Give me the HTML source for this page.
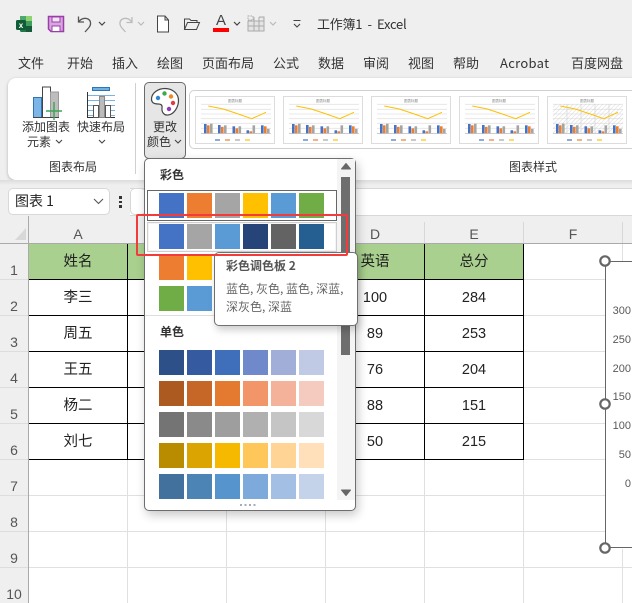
<!DOCTYPE html>
<html lang="zh"><head><meta charset="utf-8"><title>工作簿1 - Excel</title>
<style>
html,body{margin:0;padding:0;width:632px;height:603px;overflow:hidden;background:#fff}
body{position:relative;font-family:"Liberation Sans","Noto Sans CJK SC",sans-serif;color:#222}
div,span,svg{position:absolute;box-sizing:border-box}
.t{white-space:nowrap;line-height:20px;height:20px;font-size:13px;font-family:"Noto Sans CJK SC","Liberation Sans",sans-serif;color:#333}
.c{text-align:center;transform:translateX(-50%)}
.h{background:#ececec}
.s{width:25px;height:25px}
.cell{font-size:14.5px;color:#222;text-align:center;width:98px;line-height:36px;height:36px;font-family:"Liberation Sans","Noto Sans CJK SC",sans-serif}
.hd{font-size:14px;color:#555;text-align:center;width:98px;line-height:20px;height:20px;top:224px}
.rn{font-size:14px;color:#555;left:0;width:28px;text-align:center;line-height:20px;height:20px}
.b{background:#000}
.g{background:#e0e0e0}
.y{font-size:11px;color:#595959;right:1px;line-height:14px;height:14px}
</style></head><body>

<!-- top chrome -->
<div style="left:0;top:0;width:632px;height:216px;background:#efefef"></div>

<!-- QAT icons -->
<svg style="left:14px;top:14px" width="20" height="20" viewBox="0 0 20 20">
<rect x="6" y="2" width="12" height="16" rx="1.5" fill="#21784a"/><rect x="6" y="2" width="6" height="5" fill="#4ea86b"/><rect x="12" y="2" width="6" height="5" fill="#8fd36e"/><rect x="12" y="7" width="6" height="5" fill="#3f9e5f"/><rect x="12" y="12" width="6" height="6" fill="#175a3a"/><rect x="2" y="6" width="10" height="10" rx="1.5" fill="#0f5c37"/>
<text x="7" y="14" font-size="8" font-weight="bold" fill="#fff" text-anchor="middle" font-family="Liberation Sans">x</text></svg>
<svg style="left:47px;top:15px" width="18" height="18" viewBox="0 0 18 18"><path d="M1.5 1.5H16.500V16.500H4L1.500 14Z" fill="#d9a6e0" stroke="#9a3fa8" stroke-width="1.500"/><rect x="5" y="2" width="8" height="5" fill="#f3e4f5" stroke="#9a3fa8"/><rect x="5" y="11" width="8" height="5.500" fill="#fff" stroke="#9a3fa8"/></svg>
<svg style="left:76px;top:15px" width="20" height="18" viewBox="0 0 20 18"><path d="M2.500 1.500V7H8M2.800 6.800C5 3.500 9 2.500 12 4C15.500 6 15 10 13 12.500L9 17" fill="none" stroke="#555" stroke-width="1.300"/></svg>
<svg style="left:115px;top:15px" width="20" height="18" viewBox="0 0 20 18"><path d="M17 2V7.500H11.500M16.700 7C14.500 3.500 10.500 2.500 7.500 4C4 6 4.500 10 6.500 12.500L10.500 17" fill="none" stroke="#bbb" stroke-width="1.300"/></svg>
<svg style="left:97px;top:20px" width="50" height="8" viewBox="0 0 50 8"><path d="M2 2L5 5L8 2" fill="none" stroke="#444" stroke-width="1.200"/><path d="M41 2L44 5L47 2" fill="none" stroke="#bbb" stroke-width="1.200"/></svg>
<svg style="left:156px;top:15px" width="14" height="18" viewBox="0 0 14 18"><path d="M1.500 1H9L12.500 5V17H1.500ZM9 1V5H12.500" fill="#fff" stroke="#444" stroke-width="1"/></svg>
<svg style="left:183px;top:17px" width="18" height="14" viewBox="0 0 18 14"><path d="M1.500 12V2H6.500L8 3.500H14V5.500M1.500 12.500H13.500L16.500 5.500H4.500Z" fill="none" stroke="#444" stroke-width="1"/></svg>
<div class="t" style="left:213px;top:11px;font-size:15px;color:#444;font-family:'Liberation Sans';width:16px;text-align:center">A</div>
<div style="left:213px;top:28px;width:16px;height:4px;background:#f00"></div>
<svg style="left:233px;top:20px" width="50" height="8" viewBox="0 0 50 8"><path d="M1 2L4 5L7 2" fill="none" stroke="#444" stroke-width="1.200"/><path d="M37 2L40 5L43 2" fill="none" stroke="#bbb" stroke-width="1.200"/></svg>
<svg style="left:247px;top:15px" width="18" height="17" viewBox="0 0 18 17"><path d="M1 6H17V16H1ZM1 11H17M7 2V16M12 2V16M12 2H17V6" fill="#e4e4e4" stroke="#aaa" stroke-width="1"/><path d="M1 1H6V5H1Z" fill="none" stroke="#aaa" stroke-dasharray="1.500 1"/></svg>
<svg style="left:292px;top:19px" width="10" height="11" viewBox="0 0 10 11"><path d="M1.500 1.500H8.500M2 5L5 8L8 5" fill="none" stroke="#444" stroke-width="1.100"/></svg>
<div class="t" style="left:317px;top:14px;font-size:13px;color:#333;letter-spacing:-.02em">工作簿1&nbsp; -&nbsp; Excel</div>

<!-- menu -->
<div class="t" style="left:18px;top:53px">文件</div>
<div class="t" style="left:67px;top:53px">开始</div>
<div class="t" style="left:112px;top:53px">插入</div>
<div class="t" style="left:157px;top:53px">绘图</div>
<div class="t" style="left:202px;top:53px">页面布局</div>
<div class="t" style="left:273px;top:53px">公式</div>
<div class="t" style="left:318px;top:53px">数据</div>
<div class="t" style="left:363px;top:53px">审阅</div>
<div class="t" style="left:408px;top:53px">视图</div>
<div class="t" style="left:453px;top:53px">帮助</div>
<div class="t" style="left:500px;top:53px;letter-spacing:.3px">Acrobat</div>
<div class="t" style="left:571px;top:53px">百度网盘</div>

<!-- ribbon -->
<div style="left:8px;top:78px;width:640px;height:102px;background:#fff;border-radius:8px;box-shadow:0 1px 3px rgba(0,0,0,.25)"></div>

<svg style="left:32px;top:86px" width="32" height="34" viewBox="0 0 32 34">
<rect x="1.500" y="11.500" width="8" height="20" fill="#7db5e6" stroke="#2e75b6"/>
<rect x="10.500" y="1" width="8" height="30.500" fill="#fff" stroke="#444"/>
<rect x="18.500" y="6" width="8" height="25.500" fill="#bdbdbd" stroke="#999"/>
<path d="M1 31.500H27" stroke="#444"/>
<path d="M22 16V34M14 25H30" stroke="#3aa655" stroke-width="1.400"/></svg>
<div class="t c" style="left:46px;top:117px;font-size:12px">添加图表</div>
<div class="t" style="left:27px;top:132px;font-size:12px">元素</div>
<svg style="left:55px;top:139px" width="8" height="6"><path d="M1 1L4 4L7 1" fill="none" stroke="#444" stroke-width="1.100"/></svg>

<svg style="left:86px;top:86px" width="30" height="34" viewBox="0 0 30 34">
<rect x="6.500" y="1.500" width="17" height="3" fill="#6fb1e4" stroke="#2e75b6"/>
<path d="M1 9.500H29M1 14.500H29M1 19.500H29M1 24.500H29M1 29.500H29" stroke="#7ab3e0" stroke-width="1"/>
<path d="M1.500 6V31.500H29" fill="none" stroke="#333"/>
<rect x="7.500" y="19.500" width="5" height="12" fill="#fff" stroke="#555"/><rect x="13.500" y="10.500" width="5" height="21" fill="#bbb" stroke="#888"/><rect x="19.500" y="19.500" width="5" height="12" fill="#fff" stroke="#555"/></svg>
<div class="t c" style="left:101px;top:117px;font-size:12px">快速布局</div>
<svg style="left:98px;top:139px" width="8" height="6"><path d="M1 1L4 4L7 1" fill="none" stroke="#444" stroke-width="1.100"/></svg>
<div class="t c" style="left:73px;top:157px;font-size:12px">图表布局</div>
<div style="left:135px;top:83px;width:1px;height:91px;background:#d0d0d0"></div>

<div style="left:144px;top:82px;width:42px;height:77px;background:#e6e6e6;border:1px solid #6a6a6a;border-radius:5px"></div>
<svg style="left:150px;top:87px" width="30" height="30" viewBox="0 0 30 30">
<path d="M15 1.500C8 1.500 1.500 6 1.500 12C1.500 16.500 5 17 8 17C11 17 12.500 18 12 21C11.500 25 14 28.500 18 28C24 27.500 28.500 20 28.500 13.500C28.500 6 22 1.500 15 1.500Z" fill="#fff" stroke="#444" stroke-width="1.200"/>
<circle cx="8" cy="11" r="2.200" fill="#2e86d1"/><circle cx="14.500" cy="6.500" r="2.200" fill="#3ea84a"/><circle cx="21" cy="9.500" r="2.200" fill="#ee8a1d"/><circle cx="23" cy="16" r="2.200" fill="#e33b3b"/><circle cx="19" cy="22" r="2.200" fill="#8e3bb5"/></svg>
<div class="t c" style="left:165px;top:117px;font-size:12px">更改</div>
<div class="t" style="left:147px;top:132px;font-size:12px">颜色</div>
<svg style="left:174px;top:139px" width="8" height="6"><path d="M1 1L4 4L7 1" fill="none" stroke="#444" stroke-width="1.100"/></svg>

<!-- gallery -->
<div style="left:189px;top:90px;width:460px;height:59px;border:1px solid #d0d0d0;border-radius:5px;background:#fff"></div>
<svg width="0" height="0" style="left:0;top:0"><defs>
<pattern id="ha" width="3" height="3" patternUnits="userSpaceOnUse" patternTransform="rotate(45)"><path d="M0 0V3" stroke="#c9c9c9" stroke-width=".7"/></pattern>
<g id="ch">
<rect x=".5" y=".5" width="79" height="47" fill="#fff" stroke="#dcdcdc"/>
<path d="M6 8.300H76M6 13.300H76M6 18H76M6 22.700H76M6 27.300H76M6 32.300H76" stroke="#e4e4e4" stroke-width=".8"/>
<path d="M6 37.500H76" stroke="#bbb" stroke-width=".7"/>
</g>
<g id="se">
<g fill="#4472c4"><rect x="9" y="28" width="2.600" height="9.300"/><rect x="23" y="29" width="2.600" height="8.300"/><rect x="37.500" y="30.300" width="2.600" height="7"/><rect x="51.500" y="34.300" width="2.600" height="3"/><rect x="66" y="29.300" width="2.600" height="8"/></g>
<g fill="#ed7d31"><rect x="12" y="29.300" width="2.600" height="8"/><rect x="26" y="30.800" width="2.600" height="6.500"/><rect x="40.500" y="32.300" width="2.600" height="5"/><rect x="54.500" y="35.300" width="2.600" height="2"/><rect x="69" y="30.300" width="2.600" height="7"/></g>
<g fill="#a5a5a5"><rect x="15" y="27.700" width="2.600" height="9.600"/><rect x="29" y="29.300" width="2.600" height="8"/><rect x="43.500" y="30.300" width="2.600" height="7"/><rect x="57.500" y="29.300" width="2.600" height="8"/><rect x="72" y="32.800" width="2.600" height="4.500"/></g>
<path d="M13.300 10L28.300 13L43.300 18L56.700 22.700L71 16.300" fill="none" stroke="#ffc000" stroke-width="1"/>
<path d="M20 44H25" stroke="#4472c4" stroke-width="1.200"/><path d="M30 44H35" stroke="#ed7d31" stroke-width="1.200"/><path d="M40 44H45" stroke="#a5a5a5" stroke-width="1.200"/><path d="M50 44H55" stroke="#ffc000" stroke-width="1.200"/>
<text x="40" y="6" font-size="3.500" text-anchor="middle" fill="#888" font-family="Noto Sans CJK SC">图表标题</text>
</g></defs></svg>
<svg style="left:195px;top:96px" width="437" height="48" viewBox="0 0 437 48">
<use href="#ch" x="0"/><use href="#se" x="0"/>
<use href="#ch" x="88"/><use href="#se" x="88"/>
<use href="#ch" x="176"/><use href="#se" x="176"/>
<use href="#ch" x="264"/><use href="#se" x="264"/>
<use href="#ch" x="352"/>
<rect x="358" y="8" width="70" height="29.500" fill="url(#ha)"/>
<path d="M372 8V37.500M386 8V37.500M400 8V37.500M414 8V37.500" stroke="#d0d0d0" stroke-width=".6"/>
<use href="#se" x="352"/>
</svg>
<div class="t c" style="left:533px;top:157px;font-size:12px">图表样式</div>

<!-- formula bar -->
<div style="left:130px;top:188px;width:502px;height:28px;background:#fff;border-top:1px solid #d8d8d8;border-bottom:1px solid #d8d8d8"></div>
<div style="left:0;top:180px;width:632px;height:5px;background:linear-gradient(#dcdcdc,#efefef)"></div>
<div style="left:8px;top:188px;width:102px;height:27px;background:#fff;border:1px solid #d8d8d8;border-radius:5px"></div>
<div class="t" style="left:15px;top:191px;font-size:14px;color:#222">图表 1</div>
<svg style="left:93px;top:198px" width="11" height="7"><path d="M1 1L5.500 5.500L10 1" fill="none" stroke="#555" stroke-width="1.100"/></svg>
<div style="left:119px;top:196px;width:2.500px;height:2.500px;background:#333"></div>
<div style="left:119px;top:200.500px;width:2.500px;height:2.500px;background:#333"></div>
<div style="left:119px;top:205px;width:2.500px;height:2.500px;background:#333"></div>
<div style="left:130px;top:188px;width:16px;height:27px;background:#fff;border:1px solid #d8d8d8;border-radius:5px"></div>

<!-- headers -->
<div class="h" style="left:0;top:216px;width:632px;height:28px;background:#efefef"></div>
<div style="left:0;top:243px;width:632px;height:1px;background:#aaa"></div>
<div class="h" style="left:0;top:244px;width:28px;height:359px;background:#efefef"></div>
<div style="left:28px;top:216px;width:1px;height:387px;background:#aaa"></div>
<svg style="left:14px;top:227px" width="13" height="14"><path d="M12 1V13H1Z" fill="#d8d8d8"/></svg>
<div class="hd" style="left:29px">A</div><div class="hd" style="left:326px">D</div><div class="hd" style="left:425px">E</div><div class="hd" style="left:524px">F</div>
<div style="left:424px;top:222px;width:1px;height:21px;background:#d8d8d8"></div>
<div style="left:523px;top:222px;width:1px;height:21px;background:#d8d8d8"></div>
<div style="left:622px;top:222px;width:1px;height:21px;background:#d8d8d8"></div>

<div class="rn" style="top:260px">1</div><div class="rn" style="top:296px;">2</div><div class="rn" style="top:332px">3</div><div class="rn" style="top:368px">4</div><div class="rn" style="top:404px">5</div><div class="rn" style="top:440px">6</div><div class="rn" style="top:476px">7</div><div class="rn" style="top:512px">8</div><div class="rn" style="top:548px">9</div><div class="rn" style="top:584px">10</div>
<div style="left:0;top:279px;width:28px;height:1px;background:#ddd"></div><div style="left:0;top:315px;width:28px;height:1px;background:#ddd"></div><div style="left:0;top:351px;width:28px;height:1px;background:#ddd"></div><div style="left:0;top:387px;width:28px;height:1px;background:#ddd"></div><div style="left:0;top:423px;width:28px;height:1px;background:#ddd"></div><div style="left:0;top:459px;width:28px;height:1px;background:#ddd"></div><div style="left:0;top:495px;width:28px;height:1px;background:#ddd"></div><div style="left:0;top:531px;width:28px;height:1px;background:#ddd"></div><div style="left:0;top:567px;width:28px;height:1px;background:#ddd"></div>

<!-- sheet gridlines -->
<div class="g" style="left:29px;top:495px;width:576px;height:1px"></div>
<div class="g" style="left:29px;top:531px;width:576px;height:1px"></div>
<div class="g" style="left:29px;top:567px;width:603px;height:1px"></div>
<div class="g" style="left:524px;top:279px;width:81px;height:1px"></div>
<div class="g" style="left:524px;top:315px;width:81px;height:1px"></div>
<div class="g" style="left:524px;top:351px;width:81px;height:1px"></div>
<div class="g" style="left:524px;top:387px;width:81px;height:1px"></div>
<div class="g" style="left:524px;top:423px;width:81px;height:1px"></div>
<div class="g" style="left:524px;top:459px;width:81px;height:1px"></div>
<div class="g" style="left:127px;top:460px;width:1px;height:143px"></div>
<div class="g" style="left:226px;top:460px;width:1px;height:143px"></div>
<div class="g" style="left:325px;top:460px;width:1px;height:143px"></div>
<div class="g" style="left:424px;top:460px;width:1px;height:143px"></div>
<div class="g" style="left:523px;top:460px;width:1px;height:143px"></div>
<div class="g" style="left:622px;top:244px;width:1px;height:17px"></div>
<div class="g" style="left:622px;top:549px;width:1px;height:54px"></div>

<!-- table -->
<div style="left:29px;top:244px;width:495px;height:35px;background:#a9d08e"></div>
<div class="b" style="left:29px;top:279px;width:495px;height:1px"></div>
<div class="b" style="left:29px;top:315px;width:495px;height:1px"></div>
<div class="b" style="left:29px;top:351px;width:495px;height:1px"></div>
<div class="b" style="left:29px;top:387px;width:495px;height:1px"></div>
<div class="b" style="left:29px;top:423px;width:495px;height:1px"></div>
<div class="b" style="left:29px;top:459px;width:495px;height:1px"></div>
<div class="b" style="left:127px;top:244px;width:1px;height:216px"></div>
<div class="b" style="left:226px;top:244px;width:1px;height:216px"></div>
<div class="b" style="left:325px;top:244px;width:1px;height:216px"></div>
<div class="b" style="left:424px;top:244px;width:1px;height:216px"></div>
<div class="b" style="left:523px;top:244px;width:1px;height:216px"></div>

<div class="cell" style="left:29px;top:244px">姓名</div><div class="cell" style="left:29px;top:280px">李三</div><div class="cell" style="left:29px;top:316px">周五</div><div class="cell" style="left:29px;top:352px">王五</div><div class="cell" style="left:29px;top:388px">杨二</div><div class="cell" style="left:29px;top:424px">刘七</div>
<div class="cell" style="left:326px;top:244px">英语</div><div class="cell" style="left:326px;top:280px">100</div><div class="cell" style="left:326px;top:316px">89</div><div class="cell" style="left:326px;top:352px">76</div><div class="cell" style="left:326px;top:388px">88</div><div class="cell" style="left:326px;top:424px">50</div>
<div class="cell" style="left:425px;top:244px">总分</div><div class="cell" style="left:425px;top:280px">284</div><div class="cell" style="left:425px;top:316px">253</div><div class="cell" style="left:425px;top:352px">204</div><div class="cell" style="left:425px;top:388px">151</div><div class="cell" style="left:425px;top:424px">215</div>

<!-- chart -->
<div style="left:605px;top:261px;width:40px;height:287px;background:#fff;border:1.500px solid #666"></div>
<div class="y" style="top:304px">300</div><div class="y" style="top:333px">250</div><div class="y" style="top:362px">200</div><div class="y" style="top:390px">150</div><div class="y" style="top:419px">100</div><div class="y" style="top:448px">50</div><div class="y" style="top:477px">0</div>
<svg style="left:598px;top:254px" width="14" height="302"><circle cx="7" cy="7" r="4.700" fill="#fff" stroke="#666" stroke-width="2.200"/><circle cx="7" cy="150" r="4.700" fill="#fff" stroke="#666" stroke-width="2.200"/><circle cx="7" cy="294" r="4.700" fill="#fff" stroke="#666" stroke-width="2.200"/></svg>

<!-- dropdown -->
<div style="left:144px;top:158px;width:212px;height:353px;background:#fff;border:1px solid #6e6e6e;border-radius:5px;box-shadow:2px 4px 10px rgba(0,0,0,.22)"></div>
<div style="left:337px;top:159px;width:18px;height:341px;background:#f4f4f4"></div>
<div style="left:341px;top:177px;width:9px;height:178px;background:#6e6e6e"></div>
<svg style="left:340px;top:162px" width="12" height="8"><path d="M1.500 7L6 1.500L10.500 7Z" fill="#666" stroke="#666" stroke-linejoin="round"/></svg>
<svg style="left:340px;top:489px" width="12" height="8"><path d="M1.500 1L6 6.500L10.500 1Z" fill="#666" stroke="#666" stroke-linejoin="round"/></svg>
<div class="t" style="left:160px;top:165px;font-size:12px;font-weight:bold;color:#333">彩色</div>

<div style="left:147px;top:190px;width:190px;height:31px;border:1px solid #666"></div>
<div style="left:147px;top:222px;width:190px;height:30px;border:1px solid #cfcfcf;background:#f4f4f4"></div>
<div style="left:149px;top:224px;width:186px;height:26px;background:#fff"></div>

<div class="s" style="left:159px;top:193px;background:#4472c4"></div><div class="s" style="left:187px;top:193px;background:#ed7d31"></div><div class="s" style="left:215px;top:193px;background:#a5a5a5"></div><div class="s" style="left:243px;top:193px;background:#ffc000"></div><div class="s" style="left:271px;top:193px;background:#5b9bd5"></div><div class="s" style="left:299px;top:193px;background:#70ad47"></div>
<div class="s" style="left:159px;top:224px;background:#4472c4"></div><div class="s" style="left:187px;top:224px;background:#a5a5a5"></div><div class="s" style="left:215px;top:224px;background:#5b9bd5"></div><div class="s" style="left:243px;top:224px;background:#264478"></div><div class="s" style="left:271px;top:224px;background:#636363"></div><div class="s" style="left:299px;top:224px;background:#255e91"></div>
<div class="s" style="left:159px;top:255px;background:#ed7d31"></div><div class="s" style="left:187px;top:255px;background:#ffc000"></div>
<div class="s" style="left:159px;top:286px;background:#70ad47"></div><div class="s" style="left:187px;top:286px;background:#5b9bd5"></div>
<div style="left:145px;top:315px;width:192px;height:1px;background:#ddd"></div>
<div class="t" style="left:160px;top:322px;font-size:12px;font-weight:bold;color:#333">单色</div>

<div class="s" style="left:159px;top:350px;background:#2e5088"></div><div class="s" style="left:187px;top:350px;background:#365a9f"></div><div class="s" style="left:215px;top:350px;background:#3f6fba"></div><div class="s" style="left:243px;top:350px;background:#7089cb"></div><div class="s" style="left:271px;top:350px;background:#a0aed8"></div><div class="s" style="left:299px;top:350px;background:#c0cae5"></div>
<div class="s" style="left:159px;top:381px;background:#ad5a21"></div><div class="s" style="left:187px;top:381px;background:#c76727"></div><div class="s" style="left:215px;top:381px;background:#e37a30"></div><div class="s" style="left:243px;top:381px;background:#f29568"></div><div class="s" style="left:271px;top:381px;background:#f4b29b"></div><div class="s" style="left:299px;top:381px;background:#f6cbbf"></div>
<div class="s" style="left:159px;top:412px;background:#747474"></div><div class="s" style="left:187px;top:412px;background:#8a8a8a"></div><div class="s" style="left:215px;top:412px;background:#9e9e9e"></div><div class="s" style="left:243px;top:412px;background:#b0b0b0"></div><div class="s" style="left:271px;top:412px;background:#c5c5c5"></div><div class="s" style="left:299px;top:412px;background:#d8d8d8"></div>
<div class="s" style="left:159px;top:443px;background:#b98c00"></div><div class="s" style="left:187px;top:443px;background:#dba400"></div><div class="s" style="left:215px;top:443px;background:#f6b900"></div><div class="s" style="left:243px;top:443px;background:#ffc759"></div><div class="s" style="left:271px;top:443px;background:#ffd494"></div><div class="s" style="left:299px;top:443px;background:#ffe0ba"></div>
<div class="s" style="left:159px;top:474px;background:#41719c"></div><div class="s" style="left:187px;top:474px;background:#4c84b6"></div><div class="s" style="left:215px;top:474px;background:#5694cd"></div><div class="s" style="left:243px;top:474px;background:#7ea9db"></div><div class="s" style="left:271px;top:474px;background:#a3bfe3"></div><div class="s" style="left:299px;top:474px;background:#c4d3ea"></div>
<svg style="left:239px;top:503px" width="20" height="4"><path d="M1 2H3M5.500 2H7.500M10 2H12M14.500 2H16.500" stroke="#aab" stroke-width="2"/></svg>

<!-- tooltip -->
<div style="left:214px;top:252px;width:144px;height:74px;background:#fff;border:1px solid #707070;border-radius:5px;box-shadow:2px 4px 8px rgba(0,0,0,.2)"></div>
<div class="t" style="left:226px;top:256px;font-size:12px;font-weight:bold;color:#555">彩色调色板 2</div>
<div class="t" style="left:226px;top:279px;font-size:12px;color:#666">蓝色, 灰色, 蓝色, 深蓝,</div>
<div class="t" style="left:226px;top:297px;font-size:12px;color:#666">深灰色, 深蓝</div>

<!-- red highlight -->
<div style="left:136px;top:213.500px;width:211.500px;height:42px;border:2.500px solid #f23c3c;border-radius:2px"></div>

</body></html>
